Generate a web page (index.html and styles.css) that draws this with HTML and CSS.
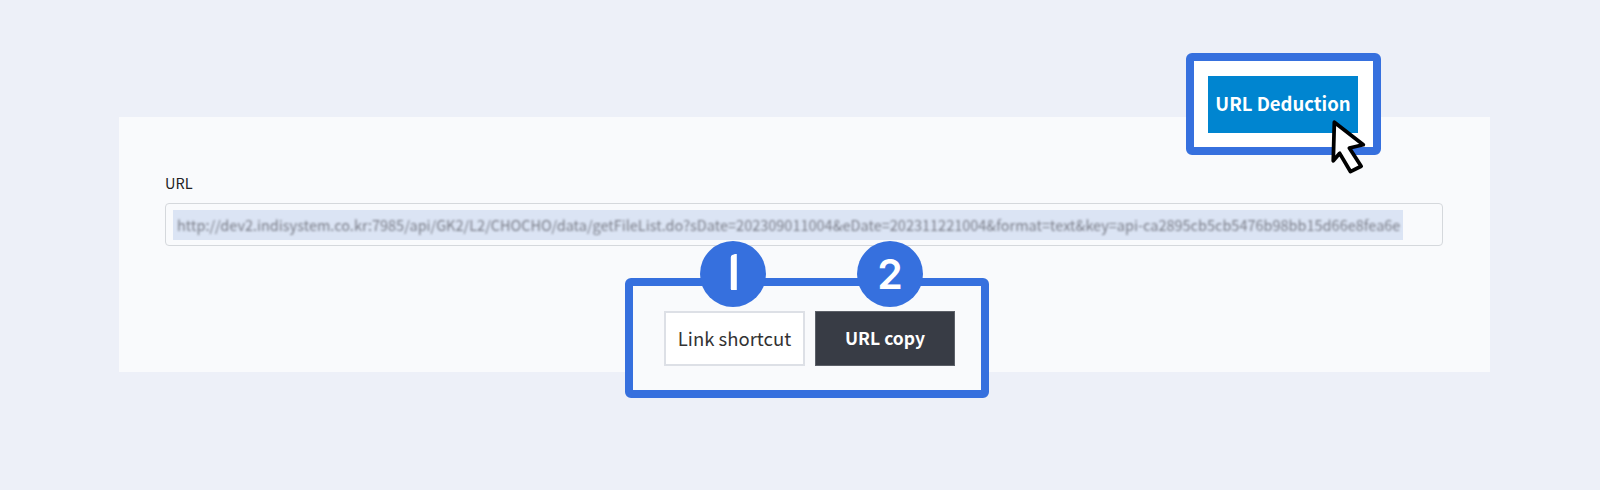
FILE: index.html
```html
<!DOCTYPE html>
<html lang="en">

<head>
    <meta charset="UTF-8">
    <title>URL Deduction</title>
    <link rel="stylesheet" href="styles.css">
</head>

<body>
    <main class="panel">
        <label class="field-label">URL</label>
        <div class="url-box">
            <span class="url-selected"><span class="url-text">http://dev2.indisystem.co.kr:7985/api/GK2/L2/CHOCHO/data/getFileList.do?sDate=202309011004&amp;eDate=202311221004&amp;format=text&amp;key=api-ca2895cb5cb5476b98bb15d66e8fea6e</span></span>
        </div>

        <div class="actions">
            <span class="badge badge-one"><span class="one-stem">1</span></span>
            <span class="badge badge-two">2</span>
            <button class="btn btn-light">Link shortcut</button>
            <button class="btn btn-dark">URL copy</button>
        </div>
    </main>

    <div class="deduction-frame">
        <button class="btn btn-blue">URL Deduction</button>
    </div>

    <svg class="cursor" width="43" height="59" viewBox="0 0 40 55">
        <path d="M4 3 L31 24 L18 27 L29 44 L19 49 L9 32 L3 39 Z" fill="#fff" stroke="#000" stroke-width="3.5" stroke-linejoin="round" />
    </svg>
</body>

</html>
```

FILE: styles.css
```css
html {
    background-color: #edf0f8;
    font-family: "Noto Sans CJK KR", "Noto Sans", sans-serif;
}

body {
    min-height: 490px;
    margin: 0;
    padding: 117px 110px 0 119px;
    box-sizing: border-box;
}

.panel {
    height: 255px;
    padding: 55px 47px 0 46px;
    box-sizing: border-box;
    background-color: #f9fafc;
}

.field-label {
    display: block;
    height: 31px;
    font-size: 14.5px;
    line-height: 22px;
    color: #222;
}

.url-box {
    display: flex;
    align-items: center;
    height: 43px;
    padding-left: 7px;
    box-sizing: border-box;
    border: 1px solid #d5d8dc;
    border-radius: 4px;
    overflow: hidden;
}

.url-selected {
    display: block;
    width: 1230px;
    height: 30px;
    padding-left: 4px;
    box-sizing: border-box;
    background-color: #dbe4f4;
}

.url-text {
    display: block;
    font-size: 14.5px;
    line-height: 30px;
    color: #7a7d88;
    white-space: nowrap;
    filter: blur(1.1px);
}

.actions {
    position: relative;
    display: flex;
    gap: 10px;
    width: 364px;
    height: 120px;
    margin: 32px 0 0 460px;
    padding: 25px 25px 24px 31px;
    box-sizing: border-box;
    border: 8px solid #3670de;
    border-radius: 6px;
    background-color: #f9fafc;
}

.btn {
    width: 141px;
    height: 55px;
    padding: 0 0 2px;
    box-sizing: border-box;
    font-family: inherit;
    font-size: 17.5px;
    font-weight: 700;
    border-radius: 0;
}

.btn-light {
    background-color: #fff;
    border: 2px solid #dde0e6;
    color: #333;
    font-size: 18.5px;
    font-weight: 400;
}

.btn-dark {
    width: 140px;
    background-color: #383c45;
    border: 1px solid #5c6068;
    color: #fff;
}

.btn-blue {
    width: 150px;
    height: 57px;
    margin-left: -1px;
    background-color: #0085d0;
    border: none;
    color: #fff;
    font-size: 18.5px;
}

.badge {
    position: absolute;
    top: -45px;
    display: flex;
    align-items: center;
    justify-content: center;
    width: 66px;
    height: 66px;
    border-radius: 50%;
    background-color: #3670de;
    color: #fff;
    font-family: Inter, sans-serif;
    font-size: 41px;
    font-weight: 600;
    line-height: 66px;
}

.badge-one {
    left: 67px;
}

.badge-two {
    left: 224px;
}

.one-stem {
    font-family: Roboto, sans-serif;
    font-size: 49px;
    font-weight: 900;
    -webkit-text-stroke: 2px #fff;
    transform: translate(-3px, -1px);
    clip-path: inset(14px 0 14px 15px round 4px);
}

.deduction-frame {
    position: absolute;
    left: 1186px;
    top: 53px;
    display: flex;
    align-items: center;
    justify-content: center;
    width: 195px;
    height: 102px;
    box-sizing: border-box;
    border: 8px solid #3670de;
    border-radius: 6px;
    background-color: #fff;
}

.cursor {
    position: absolute;
    left: 1330px;
    top: 119px;
}
```
